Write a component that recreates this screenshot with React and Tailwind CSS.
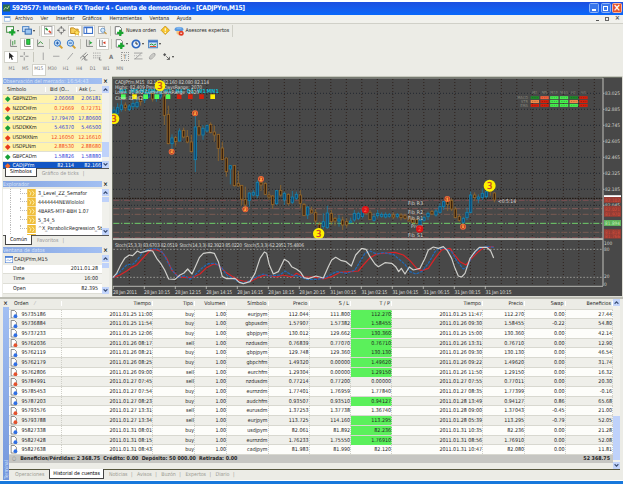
import React from "react";

const TRADES = `95735186|2011.01.25 11:00|buy|1.00|eurjpym|112.044|111.800|112.270|2011.01.25 11:47|112.270|0.00|27.44|1
95736884|2011.01.25 11:54|buy|1.00|gbpusdm|1.57907|1.57382|1.58455|2011.01.26 09:30|1.58455|-0.22|54.80|1
95737233|2011.01.25 12:06|buy|1.00|gbpjpym|130.012|129.662|130.360|2011.01.25 15:00|130.360|0.00|42.14|1
95762036|2011.01.26 08:17|sell|1.00|nzdusdm|0.76839|0.77070|0.76710|2011.01.26 13:31|0.76710|0.00|12.90|1
95762119|2011.01.26 08:21|buy|1.00|gbpjpym|129.748|129.360|130.130|2011.01.26 09:30|130.130|0.00|46.54|1
95762179|2011.01.26 08:25|buy|1.00|gbpchfm|1.49320|0.00000|1.49620|2011.01.26 09:22|1.49620|0.00|31.74|1
95762806|2011.01.26 09:00|sell|1.00|eurchfm|1.29304|0.00000|1.29150|2011.01.26 11:50|1.29150|0.00|16.32|1
95784991|2011.01.27 07:45|sell|1.00|nzdusdm|0.77214|0.77200|0.00000|2011.01.27 07:55|0.77011|0.00|20.30|0
95785453|2011.01.27 07:54|buy|1.00|eurnzdm|1.77401|1.76959|1.77840|2011.01.27 08:35|1.77399|0.00|-0.16|0
95787203|2011.01.27 08:23|buy|1.00|audchfm|0.93507|0.93510|0.94127|2011.01.28 13:49|0.94127|0.86|65.68|1
95793576|2011.01.27 13:31|sell|1.00|eurusdm|1.37253|1.37738|1.36740|2011.01.28 09:00|1.37043|-0.45|21.00|0
95793788|2011.01.27 13:34|sell|1.00|eurjpym|113.725|114.160|113.295|2011.01.28 05:39|113.295|-0.79|52.05|1
95827338|2011.01.31 08:01|buy|1.00|usdjpym|82.061|81.892|82.236|2011.01.31 10:35|82.236|0.00|21.28|1
95827428|2011.01.31 08:15|buy|1.00|eurnzdm|1.76233|1.75550|1.76910|2011.01.31 08:56|1.76910|0.00|52.08|1
95827638|2011.01.31 08:43|buy|1.00|cadjpym|81.983|81.990|82.120|2011.01.31 10:47|82.080|0.00|11.81|0`
  .split("\n")
  .map((l) => l.split("|"));

const GRID =
  "grid grid-cols-[53px_91px_42px_32px_41.5px_41px_41.5px_41px_91px_42px_40.5px_47.5px]";

const QUOTES = [
  ["GBPNZDm", "2.06068", "2.06181", true, true],
  ["NZDCHFm", "0.72669", "0.72731", false, true],
  ["USDCZKm", "17.79470", "17.80600", true, true],
  ["USDDKKm", "5.46370", "5.46500", true, true],
  ["USDMXNm", "12.16050", "12.16610", false, true],
  ["USDPLNm", "2.88530", "2.88680", false, true],
  ["GBPCADm", "1.58826", "1.58880", true, false],
];

// x, high, low, body top, body bottom, direction
const CANDLES = `12 95 125 105 120 u;23 85 125 98 115 u;34 75 110 90 104 u;46 82 108 90 98 d;58 88 108 93 104 u;69 75 105 85 95 u;81 70 100 82 95 u;92 60 92 65 80 d;104 50 85 60 75 u;116 45 70 52 66 u;128 45 80 55 72 d;139 50 80 58 70 u;151 52 72 58 66 u;163 50 150 63 121 d;175 92 208 118 206 d;186 178 226 189 206 u;197 183 214 188 200 d;209 160 200 168 198 u;221 158 190 166 186 d;232 165 205 185 201 d;244 180 232 201 230 d;256 122 291 156 254 u;267 135 180 155 180 d;279 150 194 160 180 u;291 148 172 152 168 u;302 142 175 148 172 d;313 152 200 171 180 d;325 178 258 178 220 d;337 200 254 219 254 d;349 248 305 249 290 d;361 270 328 272 282 u;373 270 335 271 332 d;385 288 335 325 333 d;395 330 392 331 373 d;406 335 400 374 390 d;418 352 395 354 376 u;430 345 365 352 360 u;442 316 370 322 362 u;453 314 348 322 330 d;466 322 360 325 358 d;477 350 375 360 366 d;488 360 402 363 388 d;500 345 390 347 386 u;512 330 365 346 360 d;523 350 390 355 375 u;535 355 392 358 386 d;547 348 387 366 382 u;559 350 375 358 370 u;571 345 400 360 385 d;582 384 422 388 422 d;593 395 432 396 420 u;605 395 415 405 414 d;617 402 450 413 438 d;628 440 462 448 460 d;640 415 462 440 455 u;652 392 462 414 458 u;664 405 450 415 440 d;675 425 452 430 438 d;687 420 455 432 438 u;698 425 465 435 450 d;710 430 458 440 450 d;722 428 445 438 442 u;733 405 440 415 435 u;745 410 435 415 430 u;757 395 430 405 425 u;768 395 420 400 415 d;780 405 435 412 434 d;792 415 440 425 436 u;803 405 430 415 422 u;815 412 428 418 424 u;827 412 430 418 426 u;838 414 428 418 424 u;850 412 432 420 426 d;862 414 430 418 424 u;873 414 436 420 428 d;885 416 434 422 430 d;897 420 440 426 438 d;908 428 445 432 442 d;920 430 448 434 445 d;930 430 458 436 450 u;942 422 440 428 436 u;954 410 435 415 425 u;966 405 420 410 417 d;978 402 425 408 420 u;990 385 415 395 412 u;1001 378 405 380 395 u;1013 370 408 372 388 d;1025 370 408 376 402 d;1036 395 430 402 428 d;1048 418 440 424 436 d;1060 425 450 430 442 u;1071 398 435 412 428 u;1082 350 415 360 412 u;1094 352 378 360 368 d;1105 358 385 366 372 u;1117 340 375 355 368 u;1129 335 370 350 365 u;1141 340 362 346 350 d;1153 352 382 354 375 d`
  .split(";")
  .map((s) => s.split(" "));

const WHITE_LINE =
  "8,608 20,595 32,570 44,550 58,540 68,542 82,528 92,533 104,530 116,526 128,528 140,550 152,565 164,585 176,612 195,613 210,600 222,594 233,582 246,597 256,575 268,548 280,535 300,532 313,535 325,560 337,605 350,611 375,610 388,622 400,626 420,620 435,595 450,550 463,531 470,535 478,570 490,597 505,590 523,553 535,560 545,575 560,583 572,592 582,608 595,611 618,603 640,609 655,575 665,555 677,547 692,556 708,560 724,573 737,540 755,520 768,523 780,545 795,567 805,575 825,563 845,565 857,575 866,590 874,580 885,597 898,576 910,585 930,580 945,550 955,525 970,516 985,520 1000,515 1012,527 1025,550 1035,580 1045,603 1055,606 1065,595 1080,550 1095,530 1108,517 1130,517 1142,527 1151,549";
const BLUE_LINE =
  "8,608 30,590 50,570 70,567 85,550 100,530 120,521 145,522 160,535 175,565 190,590 205,607 225,602 240,613 255,600 275,580 295,566 315,565 335,578 350,600 365,608 385,620 400,625 420,617 440,605 460,597 480,603 510,600 525,588 545,600 570,604 590,613 620,613 640,610 660,600 680,590 710,595 735,585 750,560 765,535 780,528 800,537 820,533 850,538 870,555 885,568 900,590 918,597 935,590 955,565 975,530 990,518 1010,522 1025,530 1040,557 1060,582 1072,575 1085,545 1105,522 1130,514 1151,517";
const RED_LINE =
  "8,608 30,600 50,588 65,577 80,570 100,548 120,527 135,523 155,530 170,550 185,585 205,605 230,608 250,606 270,597 290,578 310,567 325,570 345,590 365,603 385,615 400,618 420,620 445,607 465,600 500,606 520,600 545,606 560,595 580,606 610,606 640,612 665,605 690,592 720,590 745,588 760,570 780,548 800,537 830,534 855,532 880,540 900,557 920,580 935,587 955,580 975,550 995,525 1020,520 1030,535 1050,560 1068,570 1085,550 1105,530 1120,518 1151,515";

const MARKS = [
  [150, 32, 16, "3"],
  [12, 131, 16, "3"],
  [626, 476, 17, "3"],
  [1139, 332, 18, "3"],
  [185, 230, 9, "2"],
  [255, 115, 9, "2"],
  [406, 403, 9, "2"],
  [453, 312, 9, "2"],
  [1012, 372, 9, "1"],
  [1059, 455, 9, "1"],
];

const PRICES = ["83.025", "82.885", "82.745", "82.605", "82.465", "82.325", "82.185", "82.045"];
const DATES = ["28 Jan 2011", "28 Jan 10:15", "28 Jan 12:15", "28 Jan 14:15", "28 Jan 16:15", "28 Jan 18:15", "28 Jan 20:15", "31 Jan 00:15", "31 Jan 02:15", "31 Jan 04:15", "31 Jan 06:15", "31 Jan 08:15", "31 Jan 10:15"];
const FRAMES = [
  ["M1", "#4dff5a"], ["M5", "#fff200"], ["M15", "#4dff5a"], ["M30", "#4dff5a"], ["H1", "#4dff5a"],
  ["H4", "#d6200c"], ["D1", "#d6200c"], ["W1", "#d6200c"], ["MN1", "#fff200"],
];
const SIGNALS = [
  ["#1f8a2a", "#f7613c", "#46f04e", "#46f04e", "#1f8a2a", "#d6200c"],
  ["#f08a4a", "#d6200c", "#46f04e", "#46f04e", "#f08a4a", "#d6200c"],
  ["#d6200c", "#d6200c", "#46f04e", "#46f04e", "#46f04e", "#d6200c"],
];

function Chart() {
  return (
    <svg className="block h-[221px] w-[511px] shrink-0" viewBox="112 77 511 221">
      <rect x="112" y="77" width="511" height="221" fill="#dcdcd4" />
      <rect x="112" y="78" width="510" height="219" fill="#484848" />
      <path d="M112 78.3H622M112.4 78V297" stroke="#74786c" strokeWidth="1" />
      <path d="M113 79.2H603" stroke="#a8aca0" strokeWidth=".7" />
      {Array.from({ length: 31 }, (_, i) => (
        <path key={i} d={`M${129.3 + 15.5 * i} 80V287`} stroke="#2b1d16" strokeWidth=".9" strokeDasharray="1 2" />
      ))}
      {PRICES.map((p, i) => (
        <path key={p} d={`M113 ${94.3 + 16 * i}H603`} stroke="#1c242c" strokeWidth=".9" strokeDasharray="1 2" />
      ))}
      <g transform="translate(110 76) scale(.33333)">
        <path d="M10 370H1479" stroke="#1d120c" strokeWidth="3" strokeDasharray="5 3" />
        <g strokeWidth="2.4" strokeDasharray="18 5 4 5">
          <path d="M10 376H1479M10 488H1479" stroke="#8a5156" />
          <path d="M10 401H1479" stroke="#93625e" />
          <path d="M10 418H1479M10 472H1479" stroke="#856055" />
          <path d="M10 445H1479" stroke="#6fd06a" strokeWidth="3" />
        </g>
        {CANDLES.map(([x, h, l, t, b, d]) => (
          <g key={x} stroke={d === "u" ? "#1583ae" : "#97692a"} strokeWidth="2.4" fill={d === "u" ? "#0b4a78" : "#3a200c"}>
            <path d={`M${x} ${h}V${l}`} />
            <rect x={x - 3.5} y={t} width="7" height={b - t} />
          </g>
        ))}
        <g fill="none" strokeWidth="3.6" strokeLinejoin="round">
          <path d="M10 523H1479M10 607H1479" stroke="#aaaaa4" strokeWidth="2.4" strokeDasharray="5 5" />
          <polyline points={RED_LINE} stroke="#dc2226" />
          <polyline points={BLUE_LINE} stroke="#2069b8" strokeDasharray="9 3" />
          <polyline points={WHITE_LINE} stroke="#cfcfcb" />
        </g>
        {FRAMES.map(([n, c], i) => (
          <g key={n}>
            <text x={40 + 33.5 * i} y="54" textAnchor="middle" fontSize="16" fontWeight="bold" fill="#12b4cf">{n}</text>
            <rect x={33 + 33.5 * i} y="58" width="14" height="14" fill={c} />
          </g>
        ))}
        {SIGNALS.map((r, j) =>
          r.map((c, i) => (
            <g key={`${i}${j}`}>
              <rect x={1262 + 29.2 * i} y={63.5 + 11.6 * j} width="25" height="9" fill={c} />
              <path d={`M${1266 + 29.2 * i} ${68 + 11.6 * j}h17`} stroke="#00000055" strokeWidth="2" strokeDasharray="4 3" />
            </g>
          ))
        )}
        <g fill="#85857a" fontSize="12">
          {["M1", "M5", "M15", "M30", "H1", "H4"].map((t, i) => (
            <text key={t} x={1274 + 29.2 * i} y="58" textAnchor="middle">{t}</text>
          ))}
          <text x="1254" y="73" textAnchor="end">MACD</text>
          <text x="1254" y="84" textAnchor="end">STR</text>
          <text x="1254" y="96" textAnchor="end">EMA</text>
        </g>
      </g>
      <g fill="#d8d8d4" fontSize="5">
        <text x="115" y="84.6" textLength="94">CADJPYm,M15&#160; 82.115 82.160 82.080 82.114</text>
        <text x="115" y="89.5" textLength="87">Highs: 82.409 PreviousDaysRange: 2070</text>
        <text x="115" y="94.8" textLength="84">Lows: 81.862 CurrentDaysRange: 2020</text>
        <text x="115" y="100.9" textLength="28">Close: 82.062</text>
        <text x="408" y="205.8" textLength="15">Fib R3</text>
        <text x="408" y="214.6" textLength="15">Fib R2</text>
        <text x="408" y="220.6" textLength="15">Fib R1</text>
        <text x="411" y="229.3" textLength="12">Pivot</text>
        <text x="408" y="238.2" textLength="15">Fib S1</text>
        <text x="498" y="203.8" textLength="18">&lt;0:5:14</text>
        <text x="115" y="247.6" textLength="189">Stoch(15,3,3) 83.6703 82.0519&#160; Stoch(14,3,3) 82.3923 85.0220&#160; Stoch(5,3,3) 62.2951 75.4806</text>
        {DATES.map((t, i) => (
          <g key={i}>
            <path d={`M${113.3 + 31 * i} 287v3`} stroke="#c4c4be" strokeWidth=".8" />
            <text x={113 + 31.05 * i} y="294.7" textLength={i ? 26 : 24}>{t}</text>
          </g>
        ))}
      </g>
      <g transform="translate(110 76) scale(.33333)">
        {MARKS.map(([x, y, r, n]) => (
          <g key={x}>
            <circle cx={x} cy={y} r={r} fill={n === "3" ? "#fff200" : "#f2683a"} />
            {n !== "3" && <circle cx={x} cy={y} r="5" fill="none" stroke="#7c2e1c" strokeWidth="2" />}
            <text x={x} y={y + (n === "3" ? 10 : 5)} textAnchor="middle" fontSize={n === "3" ? 28 : 14} fontWeight={n === "3" ? "normal" : "bold"} stroke={n === "3" ? "#c8442c" : "none"} strokeWidth="1" fill={n === "3" ? "#c8442c" : "#ffb03a"}>
              {n}
            </text>
          </g>
        ))}
        {[[766, 404], [929, 462]].map(([x, y]) => (
          <g key={x}>
            <circle cx={x} cy={y} r="11" fill="#dc1418" />
            <text x={x} y={y + 6} textAnchor="middle" fontSize="17" fill="#ff6a50">2</text>
          </g>
        ))}
      </g>
      <rect x="113" y="239.2" width="490" height="1.7" fill="#c2c4bc" />
      <path d="M113 287.3H603" stroke="#c4c4be" strokeWidth=".9" />
      <path d="M603 79V287" stroke="#b8b8b2" strokeWidth="1.1" />
      <g fill="#d4d4ce" fontSize="4.8">
        {PRICES.map((p, i) => (
          <g key={p}>
            <path d={`M603 ${94.3 + 16 * i}h1.5`} stroke="#c4c4be" strokeWidth=".8" />
            <text x="605" y={96.1 + 16 * i} textLength="15">{p}</text>
          </g>
        ))}
        <rect x="604" y="196.2" width="17" height="2" fill="#fff" />
        <rect x="604" y="198" width="17" height="5.8" fill="#963c34" />
        <rect x="604" y="206.8" width="17" height="11" fill="#963c34" />
        <rect x="604" y="221" width="17" height="6" fill="#5fb45c" />
        <rect x="604" y="230.2" width="17" height="9.4" fill="#963c34" />
        <g fill="#d8503c" fontSize="4.6">
          <text x="605" y="202.6" textLength="15">82.102</text>
          <text x="605" y="211.6" textLength="15">82.021</text>
          <text x="605" y="217" textLength="15">81.970</text>
          <text x="605" y="225.7" textLength="15" fill="#c8f0b8">81.894</text>
          <text x="605" y="234.5" textLength="15">81.818</text>
          <text x="605" y="239" textLength="15">81.766</text>
        </g>
        <text x="604" y="246">100</text>
        <text x="604" y="252">80</text>
        <text x="604" y="279.4">20</text>
        <text x="604" y="286.6">0</text>
      </g>
    </svg>
  );
}

const Ico = ({ children, big }) => (
  <svg viewBox="0 0 16 16" className={big ? "h-[10px] w-[10px] overflow-visible" : "h-[8.5px] w-[8.5px] overflow-visible"} fill="none" strokeWidth="1.6">
    {children}
  </svg>
);
const Slot = ({ on, drop, children }) => (
  <div className="flex items-center">
    <div className={on ? "flex h-[12px] w-[13.5px] items-center justify-center border border-[#d2d2ca] bg-white" : "flex h-[12px] w-[13.5px] items-center justify-center"}>
      {children}
    </div>
    {drop && <div className="-ml-px mr-[2px] h-0 w-0 border-x-[1.5px] border-t-[2px] border-x-transparent border-t-[#333]" />}
  </div>
);
const Sep = () => <div className="mx-[1.5px] h-[10px] w-px bg-[#c8c8be]" />;
const Plus = ({ x = 8, y = 11 }) => <path d={`M${x} ${y - 5}v10M${x - 5} ${y}h10`} stroke="#19a52e" strokeWidth="3.6" />;
const Lens = ({ s }) => (
  <>
    <path d="M10 10l5 5" stroke="#d4a030" strokeWidth="3" />
    <circle cx="7" cy="6.5" r="5" fill="#c6e2fa" stroke="#3a7ac8" />
    <path d={s} stroke="#2459a8" />
  </>
);
const Bars = ({ children }) => (
  <>
    <path d="M3 1v13h12" stroke="#777" />
    {children}
  </>
);

function Toolbars() {
  return (
    <div className="flex h-[52px] flex-col bg-[#ecece6]">
      <div className="flex h-[13px] items-center pl-[2px]">
        <Slot drop><Ico big><rect x="1" y="1" width="11" height="9" fill="#fff" stroke="#4a8a4a" /><Plus x={10} y={10} /></Ico></Slot>
        <Slot drop><Ico big><rect x="1" y="1" width="10" height="8" fill="#d6e8fc" stroke="#4a82c4" /><rect x="5" y="5" width="10" height="8" fill="#9cc6f2" stroke="#3468ac" /></Ico></Slot>
        <Sep />
        <Slot on><Ico><rect x="1" y="1" width="14" height="14" fill="#fff" stroke="#999" /><path d="M3 4l4 4" stroke="#209a34" strokeWidth="3" /><path d="M9 9l4 4" stroke="#e04428" strokeWidth="3" /></Ico></Slot>
        <Slot><Ico><circle cx="8" cy="8" r="5" stroke="#888" /><path d="M8 0v5M8 11v5M0 8h5M11 8h5" stroke="#555" /></Ico></Slot>
        <Slot on><Ico big><path d="M1 3h5l2 2h5v7H1z" fill="#f7ce56" stroke="#c48e20" /><path d="M11 6l1.5 3 3 .4-2.3 2.2.6 3.2L11 13l-2.8 1.8.6-3.2L6.500 9.400l3-.4z" fill="#ffe45c" stroke="#d29c1c" strokeWidth="1" /></Ico></Slot>
        <Slot on><Ico><rect x="0" y="2" width="16" height="12" fill="#fff" stroke="#3a70c8" strokeWidth="2" /><path d="M5 2v12M1 3h14" stroke="#3a70c8" strokeWidth="2" /></Ico></Slot>
        <Slot><Ico><rect x="1" y="1" width="11" height="13" fill="#fff" stroke="#aaa" /><circle cx="9" cy="8" r="4" fill="#d6e8fa" stroke="#5a8ec4" /><path d="M12 11l4 4" stroke="#c89a40" strokeWidth="2.4" /></Ico></Slot>
        <Sep />
        <Slot><Ico big><path d="M2 1h7l3 3v9H2z" fill="#fff" stroke="#777" /><Plus x={10} y={11} /></Ico></Slot>
        <span className="w-[32.5px] tracking-[-0.05px]">Nueva orden</span>
        <Slot><Ico><path d="M8 0l8 8-8 8-8-8z" fill="#f8c62c" stroke="#c8921a" /><path d="M8 4v5M8 11v2" stroke="#fff" strokeWidth="2" /></Ico></Slot>
        <Slot><Ico big><ellipse cx="8" cy="5" rx="7" ry="3.5" fill="#5a9ae0" /><path d="M4 5c0-5 8-5 8 0" fill="#7cb4ee" /><path d="M4 8h7v4l-3 3-4-3z" fill="#f2c684" /><circle cx="11.5" cy="11.5" r="4" fill="#e23820" /><path d="M10 11.5h3" stroke="#fff" /></Ico></Slot>
        <span>Asesores expertos</span>
        <div className="ml-[3px] h-[12px] w-px bg-[#cfcfc6]" />
      </div>
      <div className="flex h-[13px] items-center pl-[4.5px]">
        <Slot><Ico><Bars><path d="M7 4v8M11 2v8" stroke="#2c8c34" /></Bars></Ico></Slot>
        <Slot on><Ico><Bars><rect x="7" y="1" width="6" height="9" fill="#2bd044" stroke="#19882a" /></Bars></Ico></Slot>
        <Slot><Ico><Bars><path d="M4 10l4-5 5 4" stroke="#2c8c34" /></Bars></Ico></Slot>
        <Sep />
        <Slot><Ico big><Lens s="M4.5 6.500h5M7 4v5" /></Ico></Slot>
        <Slot><Ico big><Lens s="M4.5 6.500h5" /></Ico></Slot>
        <Sep />
        <Slot><Ico><Bars><path d="M8 2v10" stroke="#777" /><path d="M9 4l5 3-5 3z" fill="#24a838" /></Bars></Ico></Slot>
        <Slot on><Ico><Bars><path d="M8 2v10" stroke="#777" /><path d="M14 4l-5 3 5 3z" fill="#d83a20" /></Bars></Ico></Slot>
        <Sep />
        <Slot drop><Ico big><path d="M2 1h7l3 3v9H2z" fill="#fff" stroke="#888" /><Plus x={10} y={11} /></Ico></Slot>
        <Slot drop><Ico big><circle cx="8" cy="8" r="6" fill="#e8f2fe" stroke="#2c66c0" strokeWidth="2.6" /><path d="M8 4v4h3" stroke="#333" /></Ico></Slot>
        <Slot drop><Ico big><rect x="1" y="2" width="14" height="12" fill="#d0e4f8" stroke="#4a80bc" /><path d="M1 4h14" stroke="#3a70c8" strokeWidth="3" /><path d="M3 9l3-1 3 2 4-2" stroke="#24983a" /><path d="M3 12h10" stroke="#e05030" /></Ico></Slot>
      </div>
      <div className="flex h-[13px] items-center pl-[2px]">
        <Slot on><Ico><path d="M4 1v12l3-3 2 5 2-1-2-5h4z" fill="#222" /></Ico></Slot>
        <Slot><Ico><path d="M8 0v6M8 10v6M0 8h6M10 8h6" stroke="#888" /></Ico></Slot>
        <Sep />
        <div className="flex gap-[0.2px] pl-px">
          <Slot><Ico><path d="M8 1v14" stroke="#999" /></Ico></Slot>
          <Slot><Ico><path d="M2 8h12" stroke="#999" /></Ico></Slot>
          <Slot><Ico><path d="M3 14L13 2" stroke="#999" /></Ico></Slot>
          <Slot><Ico><path d="M0 12L12 1M3 15L15 4M5 7l5 5M9 8v7h5" stroke="#777" /></Ico></Slot>
          <Slot><Ico><path d="M0 2h15M0 7h15M0 11h15" stroke="#999" strokeDasharray="2 1.5" /><path d="M12 10v5h4" stroke="#777" /></Ico></Slot>
          <Slot><span className="text-[6px] font-bold text-[#777]">A</span></Slot>
          <Slot><span className="border border-dotted border-[#999] px-[1.5px] text-[6px] leading-[7px] text-[#666]">T</span></Slot>
          <Slot><Ico><path d="M0 2h16M0 13h16M2 13L14 2" stroke="#999" /><path d="M0 7h16" stroke="#aaa" strokeDasharray="2 2" /></Ico></Slot>
          <Slot><Ico><ellipse cx="8" cy="8" rx="7" ry="3" transform="rotate(-45 8 8)" stroke="#999" /><path d="M4 12L12 4" stroke="#999" /></Ico></Slot>
          <Slot drop><Ico><path d="M2 5l3-3 3 3-3 3z" fill="#555" /><path d="M8 8l6 6M14 9v5H9" stroke="#555" /></Ico></Slot>
        </div>
      </div>
      <div className="flex h-[13px] items-center pl-[3px] text-[4.8px] text-[#777]">
        {["M1", "M5", "M15", "M30", "H1", "H4", "D1", "W1", "MN"].map((t) => (
          <Slot key={t} on={t === "M15"}>{t}</Slot>
        ))}
      </div>
    </div>
  );
}

const PanelTitle = ({ children }) => (
  <div className="flex h-[8px] shrink-0 items-start">
    <div className="h-[6px] flex-1 overflow-hidden bg-gradient-to-r from-[#86a6e2] to-[#a2bff2] text-[5.3px] leading-[6px] text-[#dbe6fa]">{children}</div>
    <span className="w-[7px] text-center text-[6px] font-bold leading-[6px] text-black">×</span>
  </div>
);

const Arrow = ({ up }) => (
  <div className="flex h-[7px] w-[7px] shrink-0 items-center justify-center bg-[#c3d5fb]">
    <svg viewBox="0 0 8 8" className="h-[5px] w-[5px]" fill="none" stroke="#3c5078" strokeWidth="1.8">
      <path d={up ? "M1 6l3-3 3 3" : "M1 2l3 3 3-3"} />
    </svg>
  </div>
);
const Scroll = ({ spacer, thumb }) => (
  <div className="flex w-[7px] shrink-0 flex-col bg-[#f1f1ec]">
    <Arrow up />
    <div className={spacer} />
    <div className={`w-full bg-[#bfd2fa] ${thumb}`} />
    <div className="flex-1" />
    <Arrow />
  </div>
);

const Tabs = ({ items }) => (
  <div className="flex h-[10px] shrink-0 items-start border-t border-[#555] text-[#999]">
    <div className="-mt-px ml-[2px] flex h-[9.5px] items-center border border-t-0 border-[#444] bg-white px-[4px] text-black">{items[0]}</div>
    <span className="ml-[5px] leading-[9px]">{items[1]}</span>
    <span className="ml-[4px] leading-[9px]">|</span>
  </div>
);

const Leaf = () => (
  <svg viewBox="0 0 16 16" className="h-[8.5px] w-[9px] shrink-0">
    <rect width="16" height="16" rx="1" fill="#efbd3a" />
    <path d="M3 3l4 4-2 5M9 3l4 5-3 5" stroke="#fff3b0" strokeWidth="1.7" fill="none" />
  </svg>
);

function LeftDock() {
  return (
    <div className="flex h-[221px] w-[106px] shrink-0 flex-col pt-[2px]">
      <div className="flex h-[103px] flex-col">
        <PanelTitle>Observación del mercado: 16:54:43</PanelTitle>
        <div className="flex h-[81.5px] bg-white">
          <div className="h-full w-[99px] overflow-hidden">
            <div className="grid h-[8.5px] grid-cols-[42px_31px_26px] items-center border-b border-[#cfcfc6] bg-[#ecece6]">
              <span className="pl-1">Símbolo</span>
              <span className="border-l border-white pl-[4px]">Bid (O...</span>
              <span className="border-l border-white pl-[2px]">Ask (...</span>
            </div>
            {QUOTES.map(([s, b, a, up, y]) => (
              <div key={s} className={`grid h-[9.65px] grid-cols-[42px_29px_28px] items-center border-b border-[#e0e0d4] ${y ? "bg-[#fff3ac]" : "bg-white"}`}>
                <span className="flex items-center gap-[3px] pl-[3px] tracking-[-0.1px]">
                  <i className={`h-[3.5px] w-[3.5px] rotate-45 ${up ? "bg-[#18a038]" : "bg-[#e83a1c]"}`} />
                  {s}
                </span>
                <span className={`text-right ${up ? "text-[#2d3bd8]" : "text-[#f2451c]"}`}>{b}</span>
                <span className={`pr-[1px] text-right ${up ? "text-[#2d3bd8]" : "text-[#f2451c]"}`}>{a}</span>
              </div>
            ))}
            <div className="grid h-[9.65px] grid-cols-[42px_29px_28px] bg-[#1256c4] leading-[7px] text-white">
              <span className="flex h-[7px] items-center gap-[3px] pl-[3px]">
                <i className="h-[3.5px] w-[3.5px] rotate-45 bg-[#f06a2c]" />
                CADJPYm
              </span>
              <span className="text-right">82.114</span>
              <span className="pr-[1px] text-right">82.166</span>
            </div>
          </div>
          <Scroll spacer="h-[49px]" thumb="h-[15px]" />
        </div>
        <Tabs items={["Símbolos", "Gráfico de ticks"]} />
      </div>
      <div className="flex h-[66px] flex-col">
        <PanelTitle>Explorador</PanelTitle>
        <div className="flex h-[46px] bg-white">
          <div className="h-full w-[99px] overflow-hidden">
            {["3_Level_ZZ_Semafor", "4444444NEWlololol", "4BARS-MTF-BBH 1.07", "5_34_5", "^X_ParabolicRegression_St"].map((t) => (
              <div key={t} className="flex h-[8.9px] items-center pl-[7px]">
                <div className="h-full w-[10px] border-l border-dotted border-[#bbb]" />
                <div className="h-[4.5px] w-[7px] self-start border-b border-l border-dotted border-[#bbb]" />
                <Leaf />
                <span className="ml-[2px] whitespace-nowrap tracking-[-0.02px]">{t}</span>
              </div>
            ))}
            <div className="ml-[24px] h-[2px] w-[9px] bg-[#efbd3a]" />
          </div>
          <Scroll spacer="h-[1px]" thumb="h-[5px]" />
        </div>
        <Tabs items={["Común", "Favoritos"]} />
      </div>
      <div className="flex flex-col">
        <PanelTitle>Ventana de datos</PanelTitle>
        <div className="flex h-[39px] bg-white">
          <div className="w-[99px]">
            <div className="flex h-[9.5px] items-center bg-[#ecece6] pl-[2px]">
              <svg viewBox="0 0 16 14" className="mr-px h-[7px] w-[8px]" fill="none">
                <rect x=".5" y=".5" width="15" height="13" fill="#fff" stroke="#3670d0" />
                <path d="M0 2h16" stroke="#3670d0" strokeWidth="3" />
                <path d="M3 10l3-3 3 3 4-4" stroke="#3670d0" />
              </svg>
              CADJPYm,M15
            </div>
            {[["Date", "2011.01.28"], ["Time", "16:00"], ["Open", "82.395"]].map(([k, v], i) => (
              <div key={k} className={`flex h-[9.7px] items-center justify-between border-b border-[#deded6] pl-[10px] pr-[4px] ${i === 1 ? "bg-[#f2f2ee]" : ""}`}>
                <span>{k}</span>
                <span>{v}</span>
              </div>
            ))}
          </div>
          <Scroll spacer="h-[1px]" thumb="h-[5px]" />
        </div>
      </div>
    </div>
  );
}

function Terminal() {
  return (
    <div className="flex h-[183px] border-t-2 border-[#bdbdb4] pl-[2px]">
      <div className="flex w-[7px] flex-col items-center bg-[#ecece6]">
        <span className="h-[8px] text-[6px] font-bold leading-[7px]">×</span>
        <div className="flex w-[6px] flex-1 items-end justify-center bg-gradient-to-b from-[#a2bff2] to-[#7497dc] pb-px">
          <span className="rotate-180 text-[5px] leading-[6px] text-[#dbe6fa] [writing-mode:vertical-rl]">Terminal</span>
        </div>
      </div>
      <div className="flex w-[611px] flex-col bg-[#ecece6]">
        <div className="flex">
          <div className="w-[604px]">
            <div className={`${GRID} h-[9.5px] items-center`}>
              {["Orden", "Tiempo", "Tipo", "Volumen", "Símbolo", "Precio", "S / L", "T / P", "Tiempo", "Precio", "Swap", "Beneficios"].map((h, i) => (
                <span key={i} className={i ? "border-r border-white pr-[1px] text-right" : "border-r border-white pl-[5px]"}>
                  {h}
                  {!i && <span className="ml-[6px] text-[#aaa]">⁄</span>}
                </span>
              ))}
            </div>
            {TRADES.map((r, n) => (
              <div key={r[0]} className={`${GRID} h-[9.7px] border-t border-[#d8d8d0] leading-[9px] ${n % 2 ? "bg-[#efefea]" : "bg-[#fdfdfa]"}`}>
                {r.slice(0, 12).map((c, i) =>
                  i === 0 ? (
                    <span key={i} className="flex items-center border-r border-dotted border-[#cfcfc8] pl-[1px]">
                      <svg viewBox="0 0 16 18" className="mr-[3.5px] h-[8.5px] w-[8px]">
                        <path d="M2 1h7l4 4v12H2z" fill="#fff" stroke="#555" strokeWidth="1.4" />
                        <circle cx="11" cy="13" r="4" fill={r[2] === "buy" ? "#2f6fe4" : "#e4512c"} />
                      </svg>
                      {c}
                    </span>
                  ) : (
                    <span key={i} className={`border-r border-dotted border-[#cfcfc8] text-right ${i === 7 && r[12] === "1" ? "bg-[#5bf05b]" : ""}`}>
                      {c}
                    </span>
                  )
                )}
              </div>
            ))}
            <div className="flex h-[9.5px] items-center justify-between border-t border-[#d8d8d0] bg-[#c6c6c2] pl-[3px] pr-[3px] font-bold">
              <span className="whitespace-nowrap">
                <span className="mr-[4px] font-normal text-[#888]">○</span>
                Beneficios/Pérdidas: 2 368.75&#160; Crédito: 0.00&#160; Depósito: 50 000.00&#160; Retirada: 0.00
              </span>
              <span>52 368.75</span>
            </div>
            <div className="h-[6px]" />
          </div>
          <Scroll spacer="h-[110px]" thumb="h-[44px]" />
        </div>
        <div className="flex h-[10px] items-start border-t border-[#55553c] text-[#9a9a92]">
          <span className="ml-[6px] leading-[9px] tracking-[-0.05px]">Operaciones</span>
          <span className="-mt-px ml-[4.5px] flex h-[9.5px] items-center border border-t-0 border-[#444] bg-white px-[3.5px] tracking-[-0.05px] text-black">Historial de cuentas</span>
          {["Noticias", "Avisos", "Buzón", "Expertos", "Diario"].map((t) => (
            <span key={t} className="ml-[4.5px] leading-[9px] tracking-[-0.05px]">
              {t}
              <span className="ml-[3.5px]">|</span>
            </span>
          ))}
        </div>
      </div>
    </div>
  );
}

export default function App() {
  return (
    <div className="flex h-[484px] w-[625px] flex-col overflow-hidden bg-white pt-[2px] font-['DejaVu_Sans_Condensed','DejaVu_Sans',sans-serif] text-[5.3px] leading-none text-[#222]">
      <div className="ml-[2px] flex h-[13px] w-[621px] items-center bg-gradient-to-b from-[#1c4fe0] to-[#0868fa] pl-px pr-px text-[6.6px] font-bold text-white">
        <svg viewBox="0 0 16 16" className="mr-[2px] h-[8px] w-[7px]" fill="none">
          <rect width="16" height="16" fill="#2c6a50" />
          <path d="M2 12l4-6 4 4 4-7" stroke="#c4e8a0" strokeWidth="2" />
        </svg>
        <span className="flex-1 whitespace-nowrap tracking-[-0.3px]">5929577: Interbank FX Trader 4 - Cuenta de demostración - [CADJPYm,M15]</span>
        <div className="flex gap-[1.5px]">
          <div className="flex h-[10px] w-[10px] items-end rounded-[1.5px] border border-[#8eb4f6] bg-[#3a76ea] p-[1.5px]"><i className="h-[1.5px] w-[4px] bg-white" /></div>
          <div className="h-[10px] w-[10px] rounded-[1.5px] border border-[#8eb4f6] bg-[#3a76ea] p-[1.5px]"><i className="block h-[5px] w-[5px] border border-t-[1.5px] border-white" /></div>
          <div className="flex h-[10px] w-[10px] items-center justify-center rounded-[1.5px] border border-[#f6b49c] bg-[#e4532a] text-[10px] leading-none">×</div>
        </div>
      </div>
      <div className="ml-[2px] flex h-[9.5px] w-[621px] items-center border-b border-[#d0d0c8] bg-[#f1f1ec] pl-[2px]">
        <svg viewBox="0 0 16 16" className="mr-[4px] h-[7px] w-[7px]" fill="none">
          <rect x="1" y="4" width="13" height="10" fill="#fff" stroke="#5b92d4" />
          <path d="M1 5h13" stroke="#3c7ad0" strokeWidth="3" />
        </svg>
        <div className="flex flex-1 gap-[7.7px]">
          {["Archivo", "Ver", "Insertar", "Gráficos", "Herramientas", "Ventana", "Ayuda"].map((t) => (
            <span key={t}>{t}</span>
          ))}
        </div>
        <div className="flex items-center gap-[6px] pr-[3px] text-[#555]">
          <i className="mt-[3px] h-px w-[3px] bg-[#555]" />
          <i className="h-[4px] w-[4px] border border-t-[1.5px] border-[#666]" />
          <span className="text-[7px] font-bold leading-none">×</span>
        </div>
      </div>
      <div className="ml-[2px] w-[621px]"><Toolbars /></div>
      <div className="ml-[2px] flex h-[221.5px] w-[621px] gap-[3px] bg-[#ecece6] pl-px">
        <LeftDock />
        <Chart />
      </div>
      <div className="w-[623px] bg-[#ecece6]"><Terminal /></div>
      <div className="mt-px h-[3px] w-[623px] bg-[#1778dc]" />
    </div>
  );
}
